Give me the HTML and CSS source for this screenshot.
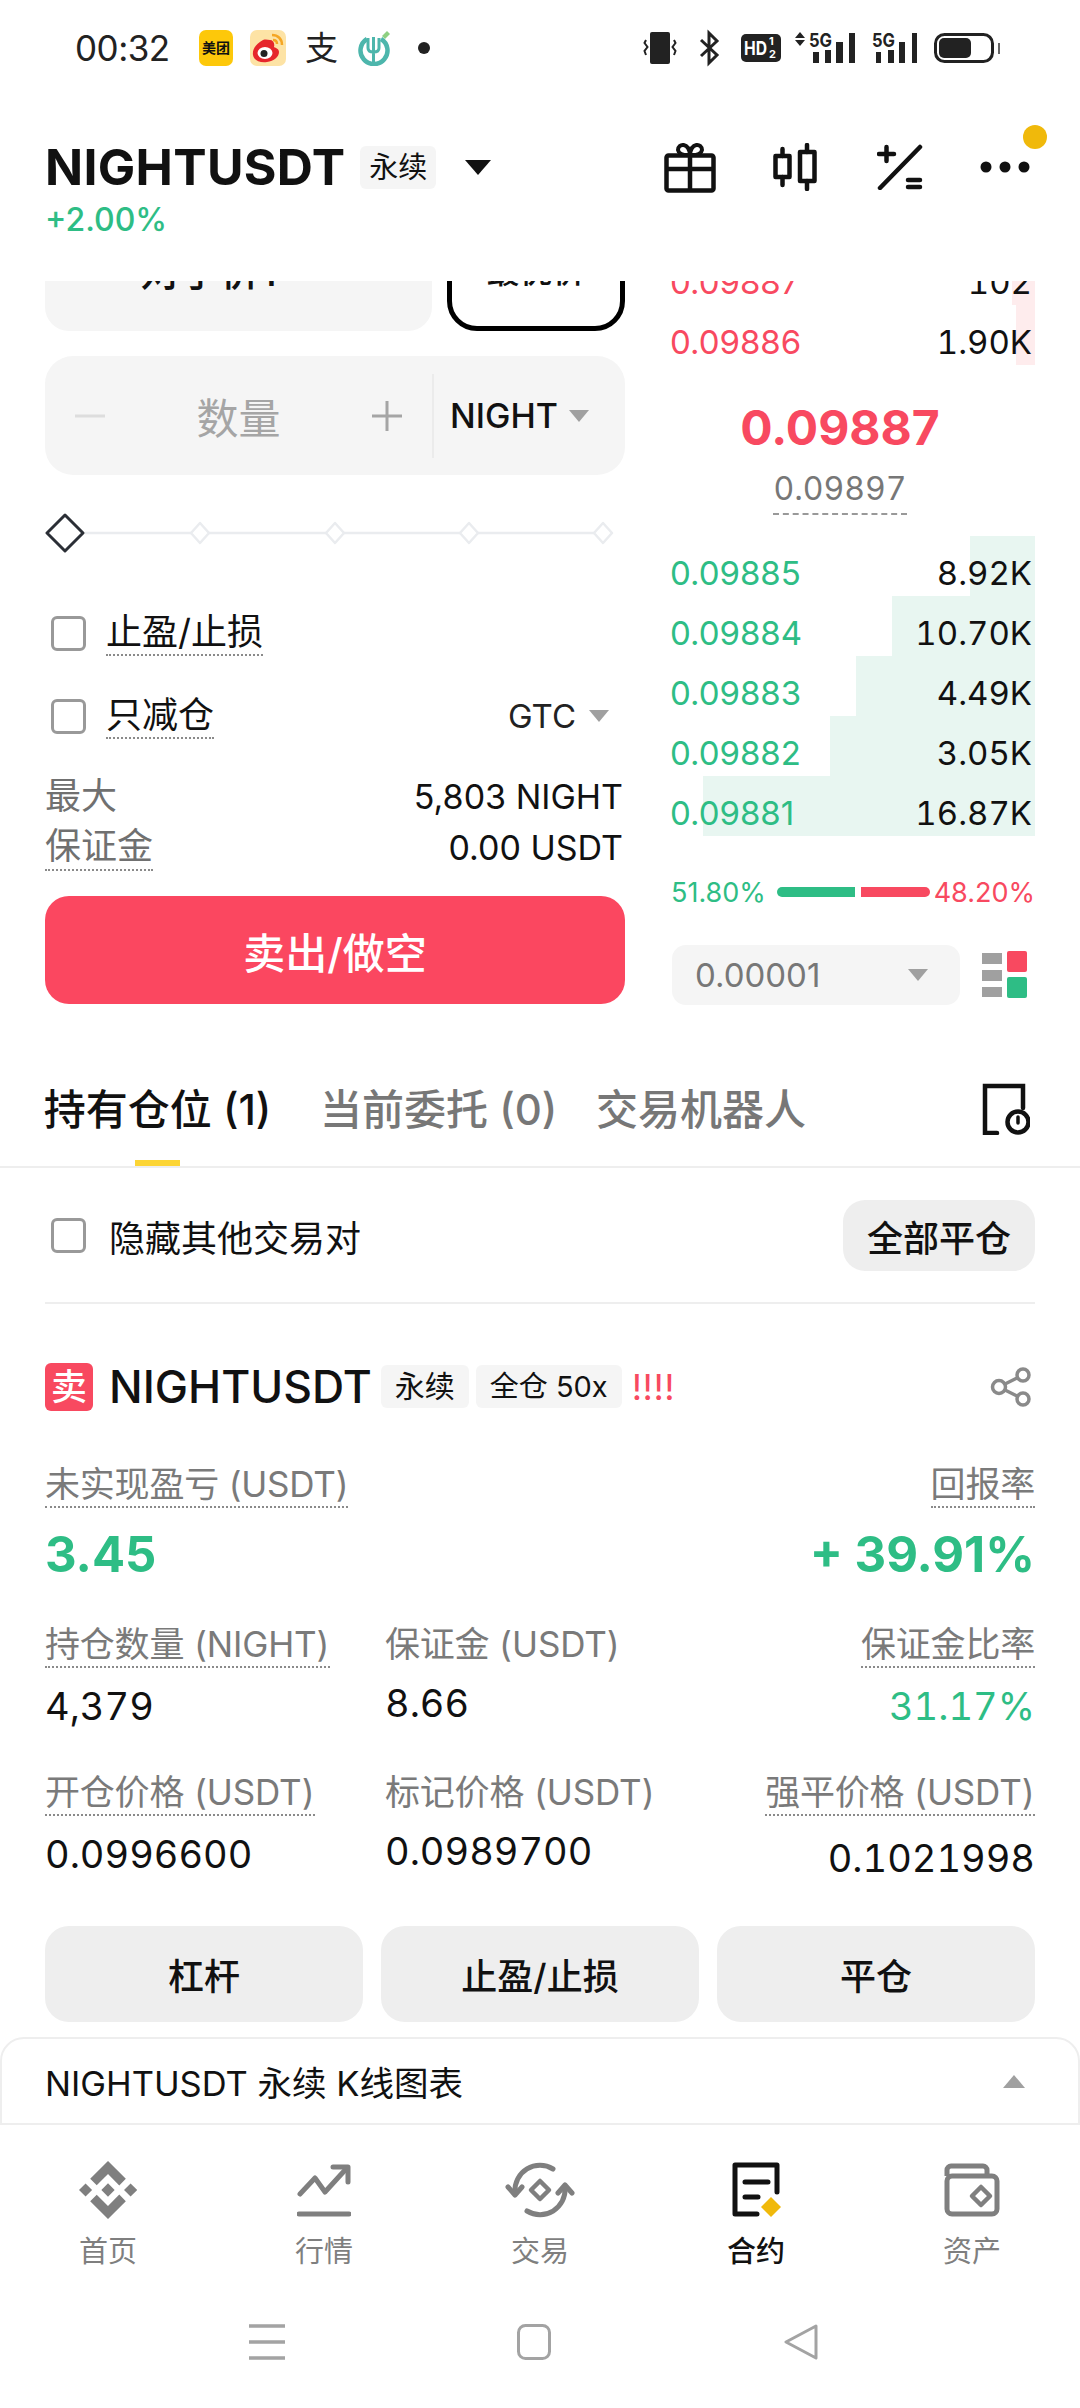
FILE: index.html
```html
<!DOCTYPE html>
<html lang="zh-CN">
<head>
  <meta charset="UTF-8">
  <title>NIGHTUSDT 永续</title>
  <link rel="stylesheet" href="styles.css">
</head>
<body>
  <div class="phone">
    <div class="status">
      <span class="clock">00:32</span>
      <span class="app-meituan">美团</span>
      <svg class="app-weibo" viewBox="0 0 36 36"><rect width="36" height="36" rx="7" fill="#fde3a5"/><path d="M13 10c-6 3-11 9-10 15 1 6 8 8 14 7 7-1 12-5 12-10 0-3-3-4-5-5 1-4-1-7-4-7-2 0-4-1-7 0z" fill="#e6262c"/><ellipse cx="15" cy="23" rx="7.500" ry="6" fill="#fff"/><circle cx="14" cy="23.500" r="3.500" fill="#222"/><path d="M22 5c6 0 10 4 10 10M23 10c2.500 0 4 1.500 4 4" fill="none" stroke="#f5a623" stroke-width="2.500"/></svg>
      <span class="app-zhi">支</span>
      <svg class="app-green" viewBox="0 0 33 36"><path d="M10 9a13.500 13.500 0 1 0 14 0" fill="none" stroke="#4db6ac" stroke-width="4.500"/><path d="M16.500 7v26M11 8v10c0 3 2.500 4 5.500 4s5.500-1 5.500-4V8" fill="none" stroke="#4db6ac" stroke-width="3"/><path d="M25 6l5-5 3 3-5 5z" fill="#8ed081"/></svg>
      <span class="status-dot"></span>
      <div class="status-right">
        <svg class="st-vibrate" viewBox="0 0 35 32"><rect x="7" y="0" width="20" height="32" rx="2" fill="#222"/><path d="M3 8l-1.500 3 3 4-3 4 1.500 4M31 8l1.500 3-3 4 3 4-1.500 4" fill="none" stroke="#222" stroke-width="2"/></svg>
        <svg class="st-bt" viewBox="0 0 20 32"><path d="M2 8l16 15-8 8V1l8 8L2 24" fill="none" stroke="#222" stroke-width="3"/></svg>
        <svg class="st-hd" viewBox="0 0 40 28"><rect width="40" height="28" rx="5" fill="#222"/><g fill="#fff" font-weight="700"><text x="3" y="21" font-size="19" textLength="23" lengthAdjust="spacingAndGlyphs">HD</text><text x="28" y="11" font-size="11">1</text><text x="28" y="24" font-size="11">2</text></g></svg>
        <svg class="st-sig-a" viewBox="0 0 61 32"><path d="M5 0l5 6H0zM5 14l5-6H0z" fill="#222"/><text x="14" y="15" font-size="19" font-weight="700" fill="#222" textLength="23" lengthAdjust="spacingAndGlyphs">5G</text><path d="M18 20h6v11h-6zM30 18h6v13h-6zM41 10h7v21h-7zM54 1h6v30h-6z" fill="#222"/></svg>
        <svg class="st-sig-b" viewBox="0 0 46 32"><text x="0" y="15" font-size="19" font-weight="700" fill="#222" textLength="23" lengthAdjust="spacingAndGlyphs">5G</text><path d="M4 20h5v11H4zM16 18h6v13h-6zM27 10h6v21h-6zM40 1h5v30h-5z" fill="#222"/></svg>
        <svg class="st-batt" viewBox="0 0 66 32"><rect x="1.500" y="2.500" width="57" height="27" rx="9" fill="none" stroke="#222" stroke-width="3"/><rect x="5" y="6" width="32" height="20" rx="5" fill="#222"/><path d="M65 11v11" stroke="#666" stroke-width="2"/></svg>
      </div>
    </div>

    <header class="header">
      <div class="title-row">
        <h1 class="symbol">NIGHTUSDT</h1>
        <span class="tag tag-title">永续</span>
        <span class="caret-black"></span>
        <div class="head-icons">
          <svg class="ic-gift" width="52" height="52" viewBox="0 0 52 52" fill="none" stroke="#111" stroke-width="4.500" stroke-linejoin="round"><rect x="2.500" y="14.500" width="47" height="35" rx="2"/><path d="M2.500 28h47M26 14.500v35"/><path d="M26 14c-3 0-11 1-12-5 0-7 11-8 12 5zM26 14c3 0 11 1 12-5 0-7-11-8-12 5z" stroke-width="4"/></svg>
          <svg class="ic-candle" width="44" height="48" viewBox="0 0 44 48" fill="none" stroke="#111" stroke-width="4.500" stroke-linecap="round" stroke-linejoin="round"><rect x="2.500" y="13" width="14" height="21"/><rect x="27" y="9" width="14.500" height="29"/><path d="M9.500 6v7M9.500 34v8M34 2v7M34 38v8"/></svg>
          <svg class="ic-calc" width="46" height="46" viewBox="0 0 46 46" fill="none" stroke="#111" stroke-width="4.500" stroke-linecap="round"><path d="M43 3L3 44M2 10h15M9.500 3v14M31 36h12M31 43h12"/></svg>
          <svg class="ic-dots" width="50" height="12" viewBox="0 0 50 12" fill="#111"><circle cx="6" cy="6" r="5.500"/><circle cx="25" cy="6" r="5.500"/><circle cx="44" cy="6" r="5.500"/></svg>
          <span class="notice-dot"></span>
        </div>
      </div>
      <div class="change">+2.00%</div>
    </header>

    <section class="trade">
      <div class="form">
        <div class="price-row">
          <div class="price-box">对手价1</div>
          <div class="best-box">最优价</div>
        </div>
        <div class="qty">
          <div class="stepper">
            <svg width="30" height="4" viewBox="0 0 30 4"><path d="M0 2h30" stroke="#ddd" stroke-width="3"/></svg>
            <span class="qty-hint">数量</span>
            <svg width="30" height="30" viewBox="0 0 30 30"><path d="M0 15h30M15 0v30" stroke="#a5a5a5" stroke-width="3"/></svg>
          </div>
          <span class="unit">NIGHT</span>
          <span class="caret-grey"></span>
        </div>
        <svg class="slider" width="580" height="40" viewBox="0 0 580 40" fill="#fff" stroke="#eaecef" stroke-width="2.500" stroke-linejoin="round">
          <path d="M40 20h518"/>
          <path d="M155 10l9 10-9 10-9-10zM290 10l9 10-9 10-9-10zM424 10l9 10-9 10-9-10zM558 10l9 10-9 10-9-10z"/>
          <path d="M20 2l18 18-18 18L2 20z" stroke="#2b2f36" stroke-width="3"/>
        </svg>
        <div class="check-row check-tp">
          <span class="checkbox"></span>
          <span class="dotted check-label">止盈/止损</span>
        </div>
        <div class="check-row check-reduce">
          <span class="checkbox"></span>
          <span class="dotted check-label">只减仓</span>
          <span class="gtc">GTC</span>
          <span class="caret-grey caret-gtc"></span>
        </div>
        <div class="info-row info-first"><span class="info-key">最大</span><span>5,803 NIGHT</span></div>
        <div class="info-row"><span class="info-key dotted">保证金</span><span>0.00 USDT</span></div>
        <button class="sell" type="button">卖出/做空</button>
      </div>

      <div class="book">
        <div class="book-row ask" style="--depth:23px"><span>0.09887</span><b>102</b></div>
        <div class="book-row ask" style="--depth:19px"><span>0.09886</span><b>1.90K</b></div>
        <div class="mid">
          <div class="last">0.09887</div>
          <div class="mark">0.09897</div>
        </div>
        <div class="book-row bid" style="--depth:65px"><span>0.09885</span><b>8.92K</b></div>
        <div class="book-row bid" style="--depth:143px"><span>0.09884</span><b>10.70K</b></div>
        <div class="book-row bid" style="--depth:179px"><span>0.09883</span><b>4.49K</b></div>
        <div class="book-row bid" style="--depth:205px"><span>0.09882</span><b>3.05K</b></div>
        <div class="book-row bid" style="--depth:332px"><span>0.09881</span><b>16.87K</b></div>
        <div class="ratio">
          <span class="up">51.80%</span>
          <span class="ratio-buy"></span>
          <span class="ratio-sell"></span>
          <span class="down">48.20%</span>
        </div>
        <div class="step-row">
          <div class="step-select"><span>0.00001</span><span class="caret-grey caret-step"></span></div>
          <svg width="46" height="48" viewBox="0 0 46 48"><path d="M0 2h20v11H0zM0 19h20v11H0zM0 36h20v10H0z" fill="#a0a0a0"/><rect x="25" y="0" width="20" height="21" rx="2" fill="#f84960"/><rect x="25" y="26" width="20" height="21" rx="2" fill="#2ebd85"/></svg>
        </div>
      </div>
    </section>

    <nav class="tabs">
      <div class="tab tab-on">持有仓位 (1)<span class="tab-mark"></span></div>
      <div class="tab">当前委托 (0)</div>
      <div class="tab">交易机器人</div>
      <svg class="tab-history" width="48" height="52" viewBox="0 0 48 52" fill="none" stroke="#111" stroke-width="4.500" stroke-linecap="round"><path d="M15 50H3V3h38v22"/><circle cx="36" cy="39" r="10.500"/><path d="M36 34v6" stroke-width="3.500"/></svg>
    </nav>

    <div class="hide-row">
      <span class="checkbox"></span>
      <span class="hide-label">隐藏其他交易对</span>
      <button class="close-all" type="button">全部平仓</button>
    </div>

    <section class="position">
      <div class="pos-head">
        <span class="side">卖</span>
        <span class="pos-symbol">NIGHTUSDT</span>
        <span class="tag">永续</span>
        <span class="tag tag-wide">全仓 50x</span>
        <span class="warn">!!!!</span>
        <svg class="share" width="42" height="40" viewBox="0 0 42 40" fill="none" stroke="#8a8a8a" stroke-width="3.500"><circle cx="9" cy="20" r="6.500"/><circle cx="33" cy="8" r="6"/><circle cx="33" cy="32" r="6"/><path d="M15 17l12-6M15 23l12 6"/></svg>
      </div>

      <div class="stat-top">
        <div>
          <span class="stat-key dotted">未实现盈亏 (USDT)</span>
          <div class="pnl">3.45</div>
        </div>
        <div class="right">
          <span class="stat-key dotted">回报率</span>
          <div class="pnl">+ 39.91%</div>
        </div>
      </div>

      <div class="stats stats-b">
        <div><span class="stat-key dotted">持仓数量 (NIGHT)</span><div class="stat-val">4,379</div></div>
        <div><span class="stat-key">保证金 (USDT)</span><div class="stat-val stat-hi">8.66</div></div>
        <div class="right"><span class="stat-key dotted">保证金比率</span><div class="stat-val up">31.17%</div></div>
      </div>
      <div class="stats stats-c">
        <div><span class="stat-key dotted">开仓价格 (USDT)</span><div class="stat-val">0.0996600</div></div>
        <div><span class="stat-key">标记价格 (USDT)</span><div class="stat-val stat-hi">0.0989700</div></div>
        <div class="right"><span class="stat-key dotted">强平价格 (USDT)</span><div class="stat-val stat-lo">0.1021998</div></div>
      </div>

      <div class="actions">
        <button type="button">杠杆</button>
        <button type="button">止盈/止损</button>
        <button type="button">平仓</button>
      </div>
    </section>

    <div class="chart-bar">
      <span>NIGHTUSDT 永续 K线图表</span>
      <span class="caret-up"></span>
    </div>

    <nav class="bottom-nav">
      <div class="nav-item">
        <svg width="58" height="60" viewBox="0 0 126.610 126.610" fill="#7f7f7f"><path d="M38.730 53.200l24.590-24.580 24.600 24.600 14.300-14.310L63.320 0 24.420 38.900zM0 63.310l14.300-14.310 14.310 14.310-14.310 14.300zM38.730 73.410l24.590 24.590 24.600-24.600 14.310 14.290-38.900 38.910-38.910-38.880zM98.280 63.310l14.300-14.300 14.320 14.300-14.310 14.300zM77.830 63.300L63.320 48.780 52.590 59.510l-1.240 1.230-2.540 2.540 14.510 14.500 14.500-14.470z"/></svg>
        <span>首页</span>
      </div>
      <div class="nav-item">
        <svg width="54" height="60" viewBox="0 0 54 60" fill="none" stroke="#7f7f7f" stroke-width="5" stroke-linecap="round" stroke-linejoin="round"><path d="M3 34l15-16 10 14L49 9"/><path d="M36 7h15v15"/><path d="M2 54h50"/></svg>
        <span>行情</span>
      </div>
      <div class="nav-item">
        <svg width="70" height="60" viewBox="0 0 70 60" fill="none" stroke="#7f7f7f" stroke-width="5" stroke-linecap="round" stroke-linejoin="round"><path d="M10 32A25 25 0 0 1 48 9M60 28A25 25 0 0 1 22 51"/><path d="M3 27l7 8 7-8M53 33l7-8 7 8"/><path d="M35 21l9 9-9 9-9-9z" stroke-width="4.500"/></svg>
        <span>交易</span>
      </div>
      <div class="nav-item nav-on">
        <svg width="52" height="60" viewBox="0 0 52 60" fill="none" stroke="#111" stroke-width="5" stroke-linecap="round" stroke-linejoin="round"><path d="M47 32V5H5v49h22"/><path d="M15 22h23M15 37h13"/><path d="M41 37l10 10-10 10-10-10z" fill="#f0b90b" stroke="none"/></svg>
        <span>合约</span>
      </div>
      <div class="nav-item">
        <svg width="56" height="60" viewBox="0 0 56 60" fill="none" stroke="#7f7f7f" stroke-width="5" stroke-linejoin="round"><path d="M3 16v-6a4 4 0 0 1 4-4h32a4 4 0 0 1 4 4v6"/><rect x="3" y="16" width="50" height="38" rx="5"/><path d="M37 27l9 9-9 9-9-9z" stroke-width="4.500"/></svg>
        <span>资产</span>
      </div>
    </nav>

    <div class="sys-nav">
      <svg width="36" height="36" viewBox="0 0 36 36"><path d="M0 2h36M0 18h36M0 34h36" stroke="#a3a3a3" stroke-width="3.500"/></svg>
      <svg width="34" height="36" viewBox="0 0 34 36"><rect x="1.500" y="1.500" width="31" height="33" rx="7" fill="none" stroke="#a3a3a3" stroke-width="3"/></svg>
      <svg width="36" height="36" viewBox="0 0 36 36"><path d="M33 2L3 18l30 16z" fill="none" stroke="#a3a3a3" stroke-width="3" stroke-linejoin="round"/></svg>
    </div>
  </div>
</body>
</html>
```

FILE: styles.css
```css
* {
  box-sizing: border-box;
}
body {
  margin: 0;
  background: #fff;
  color: #111;
  font-family: Inter, "Noto Sans CJK SC", sans-serif;
}
button {
  font: inherit;
  color: inherit;
  border: 0;
}
.phone {
  width: 1080px;
  height: 2408px;
  overflow: hidden;
}
.up { color: #2ebd85; }
.down { color: #f84960; }
.right { text-align: right; }
.dotted {
  border-bottom: 2px dotted #8a8a8a;
}

/* status bar */
.status {
  height: 96px;
  padding-left: 75px;
  display: flex;
  align-items: center;
}
.clock {
  width: 124px;
  font-size: 35px;
  letter-spacing: -0.5px;
  color: #222;
}
.app-meituan {
  width: 34px;
  height: 36px;
  margin-right: 17px;
  border-radius: 7px;
  background: #fdc80a;
  font-size: 14px;
  font-weight: 700;
  line-height: 36px;
  text-align: center;
}
.app-weibo {
  width: 36px;
  height: 36px;
  margin-right: 19px;
}
.app-zhi {
  width: 33px;
  margin-right: 19px;
  font-size: 33px;
  line-height: 36px;
  color: #222;
}
.app-green {
  width: 33px;
  height: 36px;
}
.status-dot {
  width: 12px;
  height: 12px;
  margin-left: 28px;
  border-radius: 50%;
  background: #222;
}
.status-right {
  margin-left: 213px;
  display: flex;
  align-items: center;
}
.status-right svg { overflow: visible; }
.st-vibrate { width: 35px; height: 32px; }
.st-bt { width: 20px; height: 32px; margin-left: 21px; }
.st-hd { width: 40px; height: 28px; margin-left: 22px; }
.st-sig-a { width: 61px; height: 32px; margin-left: 14px; }
.st-sig-b { width: 46px; height: 32px; margin-left: 16px; }
.st-batt { width: 66px; height: 32px; margin-left: 16px; }

/* header */
.header {
  height: 185px;
  padding: 40px 45px 0;
}
.title-row {
  height: 62px;
  display: flex;
  align-items: center;
}
.symbol {
  margin: 0;
  font-size: 50px;
  font-weight: 700;
  letter-spacing: 0.3px;
}
.tag {
  height: 43px;
  padding: 0 14px;
  margin-left: 8px;
  border-radius: 6px;
  background: #f5f5f5;
  font-size: 30px;
  line-height: 43px;
  white-space: nowrap;
}
.tag-title {
  margin-left: 15px;
  padding: 0 9px;
  font-size: 29px;
}
.caret-black {
  margin-left: 29px;
  border-style: solid;
  border-width: 15px 13px 0;
  border-color: #111 transparent transparent;
}
.head-icons {
  margin-left: auto;
  margin-right: 5px;
  display: flex;
  align-items: center;
  position: relative;
}
.ic-candle { margin-left: 57px; }
.ic-calc { margin-left: 60px; }
.ic-dots { margin-left: 57px; }
.notice-dot {
  position: absolute;
  top: -16px;
  right: -17px;
  width: 24px;
  height: 24px;
  border-radius: 50%;
  background: #f0b90b;
}
.change {
  margin-top: 2px;
  font-size: 32px;
  font-weight: 500;
  line-height: 40px;
  color: #2ebd85;
}

/* order form + book */
.trade {
  height: 786px;
  padding: 0 45px;
  overflow: hidden;
  display: grid;
  grid-template-columns: 580px 365px;
  column-gap: 45px;
}
.form, .book {
  min-width: 0;
}
.price-row {
  display: flex;
  gap: 15px;
  height: 110px;
  margin-top: -60px;
}
.price-box {
  width: 387px;
  padding-right: 60px;
  background: #f5f5f5;
  border-radius: 24px;
  font-size: 40px;
  font-weight: 500;
  text-align: center;
  line-height: 102px;
}
.best-box {
  width: 178px;
  border: 5px solid #000;
  border-radius: 30px;
  font-size: 33px;
  font-weight: 500;
  text-align: center;
  line-height: 90px;
}
.qty {
  height: 119px;
  margin-top: 25px;
  border-radius: 28px;
  background: #f5f5f5;
  display: flex;
  align-items: center;
}
.stepper {
  width: 389px;
  height: 84px;
  padding: 0 30px;
  border-right: 2px solid #ebebeb;
  display: flex;
  align-items: center;
  justify-content: space-between;
}
.qty-hint {
  font-size: 42px;
  color: #a5a5a5;
}
.unit {
  margin-left: 16px;
  font-size: 34px;
  font-weight: 500;
}
.caret-grey {
  border-style: solid;
  border-width: 12px 10px 0;
  border-color: #a0a0a0 transparent transparent;
}
.qty .caret-grey { margin-left: 11px; }
.slider {
  display: block;
  margin-top: 38px;
}
.check-row {
  height: 60px;
  display: flex;
  align-items: center;
}
.check-tp { margin-top: 50px; }
.check-reduce { margin-top: 23px; }
.checkbox {
  width: 35px;
  height: 35px;
  margin-left: 6px;
  border: 3px solid #999;
  border-radius: 6px;
  flex: none;
}
.check-label {
  margin-left: 20px;
  font-size: 36px;
  line-height: 44px;
}
.gtc {
  margin-left: auto;
  font-size: 33px;
  color: #222;
}
.caret-gtc {
  margin: 0 16px 0 13px;
}
.info-row {
  height: 50px;
  margin-top: 1px;
  padding-right: 2px;
  display: flex;
  align-items: center;
  justify-content: space-between;
  font-size: 34px;
}
.info-first { margin-top: 25px; }
.info-key {
  font-size: 36px;
  line-height: 46px;
  color: #707070;
}
.sell {
  display: block;
  width: 580px;
  height: 108px;
  margin-top: 24px;
  border-radius: 24px;
  background: #fb4760;
  color: #fff;
  font-size: 42px;
  font-weight: 500;
}

.book-row {
  --tint: #fff;
  height: 60px;
  padding: 14px 3px 0 0;
  display: flex;
  justify-content: space-between;
  font-size: 33px;
  line-height: 46px;
  background: linear-gradient(var(--tint), var(--tint)) no-repeat right / var(--depth) 100%;
}
.book-row b {
  font-weight: 400;
  font-variant-numeric: tabular-nums;
  color: #111;
}
.ask { --tint: #feeced; color: #f84960; }
.ask:first-child { margin-top: -36px; }
.bid { --tint: #e8f6f1; color: #2ebd85; }
.mid {
  height: 171px;
  padding-right: 25px;
  display: flex;
  flex-direction: column;
  align-items: center;
}
.last {
  margin-top: 34px;
  font-size: 48px;
  font-weight: 700;
  line-height: 58px;
  color: #f84960;
}
.mark {
  margin-top: 10px;
  padding-bottom: 2px;
  border-bottom: 2px dashed #999;
  font-size: 32px;
  line-height: 44px;
  font-variant-numeric: tabular-nums;
  color: #777;
}
.ratio {
  height: 40px;
  margin-top: 36px;
  display: flex;
  align-items: center;
  font-size: 27px;
}
.ratio .up { width: 107px; padding-left: 1px; }
.ratio-buy {
  width: 78px;
  height: 10px;
  border-radius: 5px 0 0 5px;
  background: #2ebd85;
}
.ratio-sell {
  width: 69px;
  height: 10px;
  margin-left: 6px;
  border-radius: 0 5px 5px 0;
  background: #f84960;
}
.ratio .down {
  margin-left: auto;
}
.step-row {
  margin-top: 33px;
  display: flex;
  align-items: center;
}
.step-select {
  width: 288px;
  height: 60px;
  margin-left: 2px;
  padding: 0 32px 0 23px;
  border-radius: 14px;
  background: #f5f5f5;
  display: flex;
  align-items: center;
  justify-content: space-between;
  font-size: 33px;
  color: #777;
}
.step-row svg { margin-left: 22px; }

/* tabs */
.tabs {
  height: 101px;
  padding: 20px 50px 0 45px;
  border-bottom: 2px solid #eee;
  display: flex;
}
.tab {
  width: 276px;
  font-size: 42px;
  font-weight: 500;
  line-height: 46px;
  color: #777;
  white-space: nowrap;
}
.tab-on {
  width: 225px;
  margin-right: 50px;
  color: #111;
  display: flex;
  flex-direction: column;
  align-items: center;
}
.tab-mark {
  width: 45px;
  height: 6px;
  margin-top: 27px;
  background: #fcd535;
}
.tab-history {
  margin: -4px 0 0 auto;
}

.hide-row {
  height: 136px;
  margin: 0 45px;
  padding-top: 32px;
  padding-bottom: 31px;
  border-bottom: 2px solid #eee;
  display: flex;
  align-items: center;
}
.hide-label {
  margin-left: 23px;
  font-size: 36px;
}
.close-all {
  width: 192px;
  height: 71px;
  margin-left: auto;
  border-radius: 22px;
  background: #eee;
  font-size: 36px;
  font-weight: 500;
}

/* position card */
.position {
  padding: 0 45px;
}
.pos-head {
  height: 49px;
  margin-top: 58px;
  display: flex;
  align-items: center;
}
.side {
  width: 48px;
  height: 48px;
  border-radius: 6px;
  background: #f84960;
  color: #fff;
  font-size: 36px;
  font-weight: 500;
  line-height: 48px;
  text-align: center;
}
.pos-symbol {
  margin-left: 16px;
  font-size: 44.500px;
  font-weight: 500;
}
.pos-head .tag { margin-left: 9px; padding: 0 14px; }
.pos-head .tag-wide { margin-left: 7px; padding: 0 14px; font-size: 29px; }
.warn {
  margin-left: 10px;
  font-size: 36px;
  letter-spacing: 0.5px;
  color: #f84960;
}
.share { margin-left: auto; margin-right: 3px; }
.stat-top {
  margin-top: 51px;
  display: flex;
  justify-content: space-between;
}
.stat-key {
  display: inline-block;
  font-size: 35px;
  letter-spacing: -0.2px;
  line-height: 44px;
  color: #7a7a7a;
  white-space: nowrap;
}
.stat-key:not(.dotted) { padding-bottom: 2px; }
.pnl {
  margin-top: 17px;
  font-size: 49px;
  font-weight: 700;
  line-height: 60px;
  color: #2ebd85;
}
.stats {
  display: grid;
  grid-template-columns: 340px 1fr auto;
  font-variant-numeric: tabular-nums;
}
.stats-b { margin-top: 37px; }
.stats-c { margin-top: 39px; }
.stat-val {
  margin-top: 13px;
  font-size: 38px;
  line-height: 50px;
}
.stat-hi { margin-top: 10px; }
.stat-lo { margin-top: 17px; }
.actions {
  margin-top: 43px;
  display: grid;
  grid-template-columns: repeat(3, 1fr);
  gap: 18px;
}
.actions button {
  height: 96px;
  border-radius: 24px;
  background: #eee;
  font-size: 36px;
  font-weight: 500;
}
.chart-bar {
  height: 88px;
  margin-top: 15px;
  padding: 0 43px;
  border: 2px solid #eee;
  border-radius: 24px 24px 0 0;
  display: flex;
  align-items: center;
  justify-content: space-between;
  font-size: 34.500px;
}
.caret-up {
  margin-right: 10px;
  border-style: solid;
  border-width: 0 11px 13px;
  border-color: transparent transparent #a0a0a0;
}

/* bottom nav */
.bottom-nav {
  padding-top: 35px;
  display: grid;
  grid-template-columns: repeat(5, 1fr);
}
.nav-item {
  display: flex;
  flex-direction: column;
  align-items: center;
  font-size: 29px;
  line-height: 36px;
  color: #7f7f7f;
}
.nav-item svg {
  margin-bottom: 14px;
}
.nav-on {
  color: #111;
  font-weight: 500;
}
.sys-nav {
  margin-top: 54px;
  padding-left: 249px;
  display: flex;
  gap: 232px;
}
```
